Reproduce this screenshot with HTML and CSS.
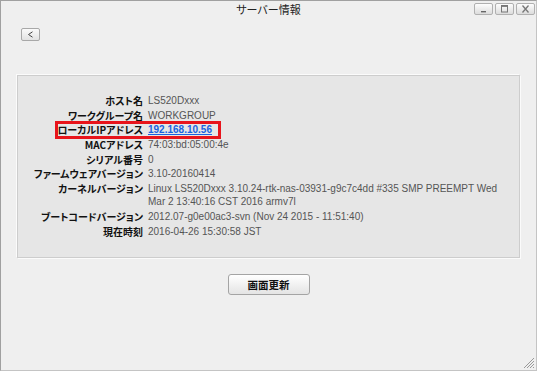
FILE: index.html
```html
<!DOCTYPE html>
<html lang="ja">
<head>
    <meta charset="UTF-8">
    <meta name="viewport" content="width=device-width, initial-scale=1.0">
    <title>サーバー情報</title>
    <link rel="stylesheet" href="styles.css">
</head>
<body>

    <div class="window">
        <!-- Barra de título -->
        <div class="titlebar">
            <span></span>
            <span class="title">サーバー情報</span>
            <div class="win-buttons">
                <button class="win-btn" title="最小化">
                    <svg width="9" height="8" viewBox="0 0 9 8"><rect x="2" y="6" width="5" height="1.4" fill="#666"/></svg>
                </button>
                <button class="win-btn" title="最大化">
                    <svg width="9" height="8" viewBox="0 0 9 8"><rect x="1.5" y="0.5" width="6" height="6.5" fill="none" stroke="#777" stroke-width="1"/><rect x="1.5" y="0.5" width="6" height="1.4" fill="#777"/></svg>
                </button>
                <button class="win-btn" title="閉じる">
                    <svg width="9" height="8" viewBox="0 0 9 8"><path d="M1.5 0.5 L7.5 7.5 M7.5 0.5 L1.5 7.5" stroke="#777" stroke-width="1.3"/></svg>
                </button>
            </div>
        </div>

        <div class="content">
            <button class="back-btn" title="戻る">
                <svg width="7" height="7" viewBox="0 0 7 7"><path d="M5.5 0.8 L1.5 3.5 L5.5 6.2" fill="none" stroke="#444" stroke-width="1"/></svg>
            </button>

            <div class="info-panel">
                <div class="row">
                    <span class="label">ホスト名</span>
                    <span class="value">LS520Dxxx</span>
                </div>
                <div class="row">
                    <span class="label">ワークグループ名</span>
                    <span class="value">WORKGROUP</span>
                </div>
                <div class="row highlighted">
                    <span class="label">ローカルIPアドレス</span>
                    <span class="value"><a href="#">192.168.10.56</a></span>
                    <span class="mark"></span>
                </div>
                <div class="row">
                    <span class="label">MACアドレス</span>
                    <span class="value">74:03:bd:05:00:4e</span>
                </div>
                <div class="row">
                    <span class="label">シリアル番号</span>
                    <span class="value">0</span>
                </div>
                <div class="row">
                    <span class="label">ファームウェアバージョン</span>
                    <span class="value">3.10-20160414</span>
                </div>
                <div class="row">
                    <span class="label">カーネルバージョン</span>
                    <span class="value">Linux LS520Dxxx 3.10.24-rtk-nas-03931-g9c7c4dd #335 SMP PREEMPT Wed Mar 2 13:40:16 CST 2016 armv7l</span>
                </div>
                <div class="row">
                    <span class="label">ブートコードバージョン</span>
                    <span class="value">2012.07-g0e00ac3-svn (Nov 24 2015 - 11:51:40)</span>
                </div>
                <div class="row">
                    <span class="label">現在時刻</span>
                    <span class="value">2016-04-26 15:30:58 JST</span>
                </div>
            </div>

            <div class="actions">
                <button class="refresh-btn">画面更新</button>
            </div>
        </div>

        <svg class="grip" width="14" height="14" viewBox="0 0 14 14">
            <path d="M13 3 L3 13 M13 6 L6 13 M13 9 L9 13 M13 12 L12 13" stroke="#999" stroke-width="1"/>
        </svg>
    </div>

</body>
</html>
```

FILE: styles.css
```css
:root {
    --bg-color: #efefef;
    --panel-color: #e6e6e6;
    --label-color: #111;
    --value-color: #555;
    --link-color: #1a62e0;
    --border-color: #a0a0a0;
}

* {
    box-sizing: border-box;
    margin: 0;
    padding: 0;
}

body {
    font-family: "Liberation Sans", Arial, sans-serif;
    background-color: #fff;
}

.window {
    position: relative;
    width: 537px;
    height: 371px;
    background-color: var(--bg-color);
    border: 1px solid var(--border-color);
    border-right-color: #c4c4c4;
    border-bottom-color: #c4c4c4;
}

.titlebar {
    display: grid;
    grid-template-columns: 1fr auto 1fr;
    height: 17px;
}

.title {
    font-family: "Noto Sans CJK JP", sans-serif;
    font-feature-settings: "palt";
    font-size: 11px;
    line-height: 17px;
    color: #222;
}

.win-buttons {
    justify-self: end;
    display: flex;
    gap: 2px;
    padding: 2px 1px 0 0;
}

.win-btn {
    display: flex;
    align-items: center;
    justify-content: center;
    width: 19px;
    height: 12px;
    border: 1px solid #b0b0b0;
    border-radius: 2px;
    background: linear-gradient(#fdfdfd, #dcdcdc);
}

.content {
    padding: 10px 16px 0;
}

.back-btn {
    display: flex;
    align-items: center;
    justify-content: center;
    width: 19px;
    height: 13px;
    margin-left: 4px;
    border: 1px solid #a8a8a8;
    border-radius: 2px;
    background: linear-gradient(#fafafa, #e2e2e2);
}

.info-panel {
    display: flex;
    flex-direction: column;
    gap: 1.7px;
    margin-top: 34px;
    padding: 18px 0 19px;
    background-color: var(--panel-color);
    border: 1px solid #cdcdcd;
    box-shadow: -1px -1px 0 #fbfbfb, 1px 1px 0 #fbfbfb;
}

.row {
    display: grid;
    grid-template-columns: 125px 355px;
    column-gap: 5px;
    line-height: 13px;
}

.label {
    font-family: "Noto Sans CJK JP", sans-serif;
    font-feature-settings: "palt";
    font-size: 10px;
    font-weight: 700;
    text-align: right;
    white-space: nowrap;
    color: var(--label-color);
}

.value {
    font-size: 10px;
    color: var(--value-color);
}

.value a {
    color: var(--link-color);
    font-weight: 700;
}

.highlighted {
    position: relative;
}

/* recuadro rojo de la anotación */
.mark {
    position: absolute;
    left: 37px;
    top: -2px;
    width: 166px;
    height: 18px;
    border: 3px solid #e8141b;
}

.actions {
    display: flex;
    justify-content: center;
    margin-top: 16px;
}

.refresh-btn {
    width: 82px;
    height: 21px;
    border: 1px solid #a4a4a4;
    border-radius: 3px;
    background: linear-gradient(#ffffff, #e4e4e4);
    font-family: "Noto Sans CJK JP", sans-serif;
    font-size: 10.5px;
    font-weight: 700;
    color: #111;
}

.grip {
    position: absolute;
    right: 1px;
    bottom: 1px;
}
```
